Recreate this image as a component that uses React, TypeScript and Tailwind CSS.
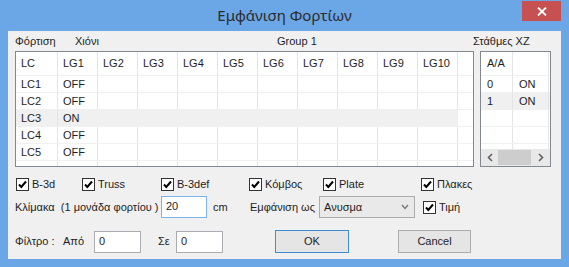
import React from "react";

const cols = ["LG1", "LG2", "LG3", "LG4", "LG5", "LG6", "LG7", "LG8", "LG9", "LG10"];
const rows = [
  { lc: "LC1", v: "OFF" },
  { lc: "LC2", v: "OFF" },
  { lc: "LC3", v: "ON", sel: true },
  { lc: "LC4", v: "OFF" },
  { lc: "LC5", v: "OFF" },
];

function Check({ label, className = "" }: { label: string; className?: string }) {
  return (
    <div className={"flex items-center gap-[3px] " + className}>
      <span className="w-[13px] h-[13px] border border-[#333333] bg-white flex items-center justify-center">
        <svg width="11" height="11" viewBox="0 0 11 11">
          <path d="M2 5.5 L4.3 8 L9 2.5" fill="none" stroke="#000" strokeWidth="2" />
        </svg>
      </span>
      <span>{label}</span>
    </div>
  );
}

function Input({ value, focus, className = "" }: { value: string; focus?: boolean; className?: string }) {
  return (
    <div
      className={
        "h-[22px] bg-white border pl-[4px] pt-[2px] leading-[14px] " +
        (focus ? "border-[#7eb4ea] " : "border-[#abadb3] ") +
        className
      }
    >
      {value}
    </div>
  );
}

export default function App() {
  return (
    <div className="w-[569px] h-[267px] bg-[#6ba6e6] flex flex-col font-['Liberation_Sans',Arial,sans-serif] text-[11px] text-[#1e1e1e] overflow-hidden">
      {/* title bar */}
      <div className="h-[31px] relative flex items-center justify-center">
        <span className="font-['Noto_Sans',sans-serif] text-[15px] text-[#2b2b2b] -mt-[1px]">Εμφάνιση Φορτίων</span>
        <div className="absolute right-[8px] top-[1px] w-[39px] h-[20px] bg-[#c75050] flex items-center justify-center">
          <svg width="10" height="9" viewBox="0 0 10 9">
            <path d="M1 0.5 L9 8.5 M9 0.5 L1 8.5" stroke="#fff" strokeWidth="1.8" />
          </svg>
        </div>
      </div>

      {/* client area */}
      <div className="mx-[8px] mb-[8px] flex-1 bg-[#f0f0f0] pl-[7px] flex flex-col">
        {/* top: grids */}
        <div className="flex gap-[6px]">
          <div className="flex flex-col">
            <div className="h-[20px] flex items-end pb-[2px]">
              <span className="w-[60px]">Φόρτιση</span>
              <span className="w-[202px]">Χιόνι</span>
              <span>Group 1</span>
            </div>
            <div className="w-[459px] h-[116px] border border-[#828790] bg-white flex flex-col">
              <div className="flex h-[24px] border-b border-[#f0f0f0]">
                <div className="w-[42px] border-r border-[#e5e5e5] pl-[5px] flex items-center">LC</div>
                {cols.map((c) => (
                  <div key={c} className="w-[40px] border-r border-[#e5e5e5] pl-[5px] flex items-center">
                    {c}
                  </div>
                ))}
              </div>
              {rows.map((r) => (
                <div key={r.lc} className="flex h-[17px] border-b border-[#f0f0f0]">
                  <div className={"w-[42px] border-r border-[#e5e5e5] pl-[5px] flex items-center " + (r.sel ? "bg-[#f0f0f0]" : "")}>
                    {r.lc}
                  </div>
                  {cols.map((c, i) => (
                    <div
                      key={c}
                      className={"w-[40px] border-r border-[#e5e5e5] pl-[5px] flex items-center " + (r.sel ? "bg-[#f0f0f0] border-[#f0f0f0]" : "")}
                    >
                      {i === 0 ? r.v : ""}
                    </div>
                  ))}
                </div>
              ))}
              <div className="flex flex-1">
                <div className="w-[42px] border-r border-[#e5e5e5]" />
                {cols.map((c) => (
                  <div key={c} className="w-[40px] border-r border-[#e5e5e5]" />
                ))}
              </div>
            </div>
          </div>

          <div className="flex flex-col">
            <div className="h-[20px] -ml-[7px] pt-[2px]">Στάθμες XZ</div>
            <div className="w-[71px] h-[116px] border border-[#828790] bg-white flex flex-col">
              <div className="flex h-[24px] border-b border-[#f0f0f0]">
                <div className="w-[32px] border-r border-[#e5e5e5] pl-[6px] flex items-center">A/A</div>
                <div className="w-[36px] border-r border-[#e5e5e5]" />
              </div>
              {[
                ["0", "ON", false],
                ["1", "ON", true],
                ["", "", false],
                ["", "", false],
              ].map(([a, b, sel], i) => (
                <div key={i} className={"flex h-[17px] border-b border-[#f0f0f0] " + (sel ? "bg-[#f0f0f0]" : "")}>
                  <div className="w-[32px] border-r border-[#e5e5e5] pl-[6px] flex items-center">{a as string}</div>
                  <div className="w-[36px] border-r border-[#e5e5e5] pl-[6px] flex items-center">{b as string}</div>
                </div>
              ))}
              <div className="flex flex-1">
                <div className="w-[32px] border-r border-[#e5e5e5]" />
                <div className="w-[36px] border-r border-[#e5e5e5]" />
              </div>
              <div className="h-[17px] bg-[#e8e8e8] flex items-center">
                <div className="w-[17px] flex items-center justify-center">
                  <svg width="6" height="9" viewBox="0 0 6 9">
                    <path d="M5 1 L1.5 4.5 L5 8" fill="none" stroke="#606060" strokeWidth="1.6" />
                  </svg>
                </div>
                <div className="w-[33px] h-[15px] bg-[#cdcdcd]" />
                <div className="flex-1 flex items-center justify-center">
                  <svg width="6" height="9" viewBox="0 0 6 9">
                    <path d="M1 1 L4.5 4.5 L1 8" fill="none" stroke="#606060" strokeWidth="1.6" />
                  </svg>
                </div>
              </div>
            </div>
          </div>
        </div>

        {/* checkboxes */}
        <div className="flex items-center mt-[10px] pl-[1px] h-[14px]">
          <Check label="B-3d" className="w-[66px]" />
          <Check label="Truss" className="w-[79px]" />
          <Check label="B-3def" className="w-[88px]" />
          <Check label="Κόμβος" className="w-[74px]" />
          <Check label="Plate" className="w-[98px]" />
          <Check label="Πλακες" />
        </div>

        {/* scale row */}
        <div className="flex items-center mt-[5px] h-[22px]">
          <span className="w-[146px]">Κλίμακα&nbsp; (1 μονάδα φορτίου )</span>
          <Input value="20" focus className="w-[46px]" />
          <span className="ml-[6px] w-[37px]">cm</span>
          <span className="w-[69px]">Εμφάνιση ως</span>
          <div className="w-[96px] h-[22px] border border-[#acacac] bg-[#e9e9e9] flex items-center pl-[4px] pr-[5px] justify-between">
            <span>Ανυσμα</span>
            <svg width="8" height="6" viewBox="0 0 8 6">
              <path d="M1 1 L4 4.5 L7 1" fill="none" stroke="#7a7a7a" strokeWidth="1.4" />
            </svg>
          </div>
          <Check label="Τιμή" className="ml-[8px]" />
        </div>

        {/* filter row */}
        <div className="flex items-center mt-[12px] h-[23px]">
          <span className="w-[48px]">Φίλτρο :</span>
          <span className="w-[31px]">Από</span>
          <Input value="0" className="w-[47px]" />
          <span className="ml-[17px] w-[18px]">Σε</span>
          <Input value="0" className="w-[47px]" />
          <div className="ml-[52px] w-[74px] h-[23px] border border-[#3c8fd6] bg-[#e5e5e5] flex items-center justify-center">
            OK
          </div>
          <div className="ml-[49px] w-[73px] h-[23px] border border-[#acacac] bg-[#e5e5e5] flex items-center justify-center">
            Cancel
          </div>
        </div>
      </div>
    </div>
  );
}
